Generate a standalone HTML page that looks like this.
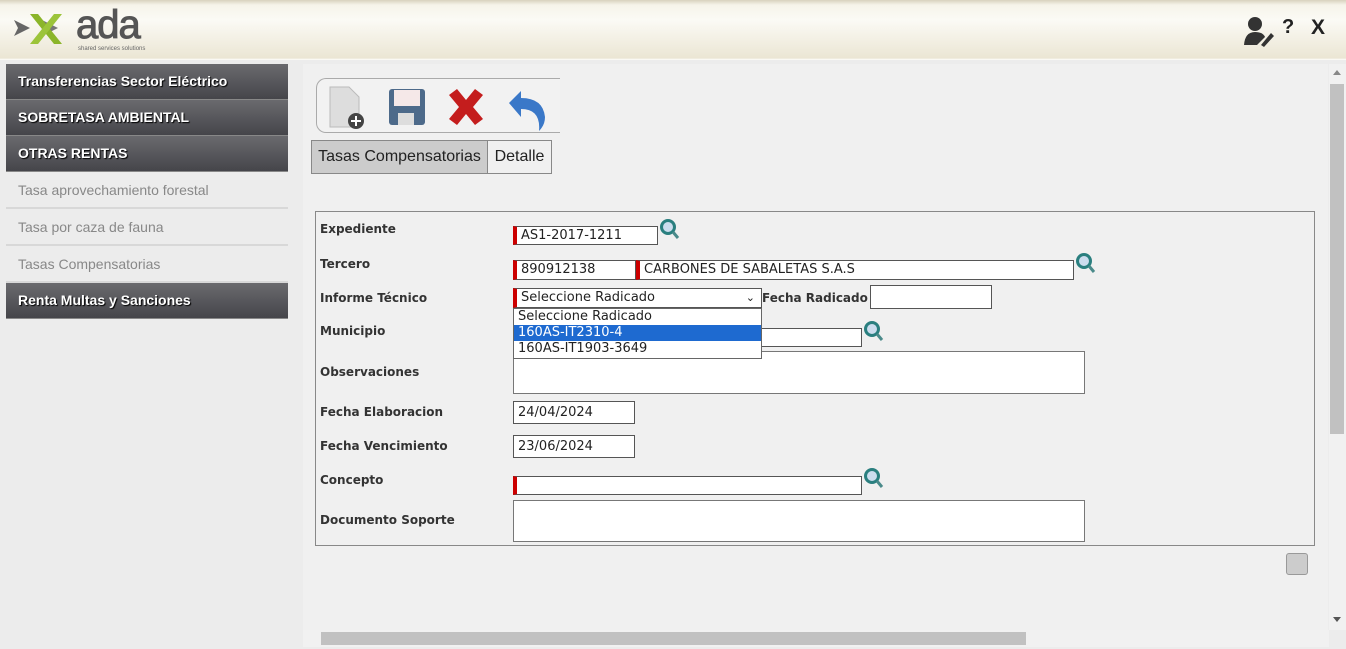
<!DOCTYPE html>
<html><head><meta charset="utf-8"><style>
*{box-sizing:border-box;margin:0;padding:0}
body{width:1346px;height:649px;overflow:hidden;background:#ececec;font-family:"Liberation Sans",sans-serif;position:relative}
.hdr{position:absolute;left:0;top:0;width:1346px;height:60px;background:linear-gradient(#d8d2bd 0,#f6f4ea 5px,#fbfaf5 20px,#ebe6d4 58px,#fff 60px)}
.side{position:absolute;left:6px;top:64px;width:282px}
.mi{height:36px;background:linear-gradient(#6a6a6e,#45454a);color:#fff;font-weight:bold;font-size:14px;line-height:34px;padding-left:12px;border-bottom:1px solid #888;text-shadow:1px 1px 1px #000}
.si{height:37px;background:#ececec;color:#888;font-size:14px;line-height:36px;padding-left:12px;border-bottom:2px solid #d8d8d8}
.main{position:absolute;left:303px;top:64px;width:1025px;height:566px;background:#f0f0f0}
.tb{position:absolute;left:316px;top:78px;width:244px;height:55px;border:1px solid #aaa;border-right:none;border-radius:10px 0 0 10px;background:#f2f2f2}
.tab{position:absolute;top:140px;height:34px;border:1px solid #888;font-size:16px;line-height:32px;text-align:center;color:#222}
.fs{position:absolute;left:315px;top:211px;width:1000px;height:335px;border:1px solid #888}
.lb{position:absolute;left:320px;font-family:"DejaVu Sans",sans-serif;font-weight:bold;font-size:12px;color:#333}
.in{position:absolute;height:20px;border:1px solid #555;background:#fff;font-family:"DejaVu Sans",sans-serif;font-size:13px;line-height:18px;padding-left:4px;color:#222}
.rq{border-left:4px solid #c00}
.ta{position:absolute;border:1px solid #777;background:#fff}
.mag{position:absolute;width:22px;height:22px}
</style></head><body>
<div class="hdr">
<svg style="position:absolute;left:0;top:0" width="160" height="56"><path d="M14 20 L30 28 L14 36 L18 28Z" fill="#666"/><path d="M42 20 L58 28 L42 36 L46 28Z" fill="#777"/><path d="M30 14 L38 14 L62 44 L54 44Z" fill="#8bb52a"/><path d="M54 14 L62 14 L38 44 L30 44Z" fill="#9cc43a"/><text x="76" y="38" font-family="Liberation Sans" font-size="40" fill="#555" stroke="#555" stroke-width="1" letter-spacing="-1">ada</text><text x="78" y="50" font-size="6" fill="#666" font-family="Liberation Sans">shared services solutions</text></svg>
<svg style="position:absolute;left:1243px;top:15px" width="32" height="32"><circle cx="12" cy="9" r="7" fill="#333"/><path d="M1 30 Q2 17 12 17 Q20 17 22 22 L14 30Z" fill="#333"/><path d="M18 30 L28 18 L31 21 L21 32Z" fill="#333"/></svg>
<div style="position:absolute;left:1282px;top:16px;font-weight:bold;font-size:20px;color:#222">?</div>
<div style="position:absolute;left:1311px;top:16px;font-weight:bold;font-size:21px;color:#222">X</div>
</div>
<div class="side">
<div class="mi">Transferencias Sector Eléctrico</div>
<div class="mi">SOBRETASA AMBIENTAL</div>
<div class="mi">OTRAS RENTAS</div>
<div class="si">Tasa aprovechamiento forestal</div>
<div class="si">Tasa por caza de fauna</div>
<div class="si">Tasas Compensatorias</div>
<div class="mi">Renta Multas y Sanciones</div>
</div>
<div class="main"></div>
<div style="position:absolute;left:1329px;top:64px;width:17px;height:566px;background:#f1f1f1"><div style="position:absolute;left:1px;top:20px;width:14px;height:350px;background:#c1c1c1"></div><div style="position:absolute;left:4px;top:6px;border:4px solid transparent;border-bottom:5px solid #888;border-top:0"></div><div style="position:absolute;left:4px;top:553px;border:4px solid transparent;border-top:5px solid #555;border-bottom:0"></div></div>
<div style="position:absolute;left:303px;top:630px;width:1026px;height:17px;background:#f1f1f1"><div style="position:absolute;left:18px;top:2px;width:705px;height:13px;background:#c1c1c1"></div></div>
<div class="tb">
<svg style="position:absolute;left:10px;top:6px" width="40" height="44"><path d="M3 2 H22 L32 12 V42 H3Z" fill="#ddd" stroke="#bbb"/><circle cx="29" cy="36" r="8" fill="#444"/><path d="M29 31V41M24 36H34" stroke="#fff" stroke-width="2"/></svg>
<svg style="position:absolute;left:70px;top:8px" width="40" height="40"><rect x="2" y="2" width="36" height="36" rx="3" fill="#4d6a8a"/><rect x="7" y="3" width="26" height="16" fill="#f5e8e8"/><rect x="11" y="26" width="16" height="12" fill="#ddd"/></svg>
<svg style="position:absolute;left:128px;top:8px" width="42" height="40"><path d="M4 8 L12 2 L21 13 L30 2 L38 8 L28 20 L38 32 L30 38 L21 27 L12 38 L4 32 L14 20Z" fill="#c41d1d"/></svg>
<svg style="position:absolute;left:188px;top:8px" width="44" height="44"><path d="M4 16 L16 4 V11 Q38 11 40 30 Q40 38 34 44 Q36 22 16 22 V30Z" fill="#3a78c8"/></svg>
</div>
<div class="tab" style="left:311px;width:177px;background:#ccc">Tasas Compensatorias</div>
<div class="tab" style="left:487px;width:65px;background:#f0f0f0">Detalle</div>
<div class="fs"></div>
<div class="lb" style="top:222px">Expediente</div>
<div class="lb" style="top:257px">Tercero</div>
<div class="lb" style="top:291px">Informe Técnico</div>
<div class="lb" style="top:324px">Municipio</div>
<div class="lb" style="top:365px">Observaciones</div>
<div class="lb" style="top:405px">Fecha Elaboracion</div>
<div class="lb" style="top:439px">Fecha Vencimiento</div>
<div class="lb" style="top:473px">Concepto</div>
<div class="lb" style="top:513px">Documento Soporte</div>
<div class="lb" style="top:291px;left:762px">Fecha Radicado</div>
<div class="in rq" style="left:513px;top:226px;width:145px;height:19px">AS1-2017-1211</div>
<div class="in rq" style="left:513px;top:260px;width:123px">890912138</div>
<div class="in rq" style="left:636px;top:260px;width:438px">CARBONES DE SABALETAS S.A.S</div>
<div class="in rq" style="left:513px;top:288px;width:249px;padding-left:4px">Seleccione Radicado<span style="position:absolute;right:6px;top:0;font-size:11px">&#8964;</span></div>
<div class="in" style="left:870px;top:285px;width:122px;height:24px"></div>
<div class="in" style="left:760px;top:328px;width:102px;height:19px"></div>
<div class="ta" style="left:513px;top:351px;width:572px;height:43px"></div>
<div class="in" style="left:513px;top:401px;width:122px;height:23px;line-height:21px">24/04/2024</div>
<div class="in" style="left:513px;top:435px;width:122px;height:23px;line-height:21px">23/06/2024</div>
<div class="in rq" style="left:513px;top:476px;width:349px;height:19px"></div>
<div class="ta" style="left:513px;top:500px;width:572px;height:42px"></div>
<div style="position:absolute;left:513px;top:308px;width:249px;height:51px;border:1px solid #666;background:#fff;font-family:'DejaVu Sans',sans-serif;font-size:13px;line-height:16px;color:#222">
<div style="padding-left:4px">Seleccione Radicado</div><div style="padding-left:4px;background:#1e6ad0;color:#fff">160AS-IT2310-4</div><div style="padding-left:4px">160AS-IT1903-3649</div></div>
<svg class="mag" style="left:658px;top:218px"><circle cx="10" cy="9" r="6.5" fill="#cde" stroke="#2a7f7f" stroke-width="3"/><path d="M15 14 L20 20" stroke="#4a8a8a" stroke-width="3"/></svg>
<svg class="mag" style="left:1074px;top:252px"><circle cx="10" cy="9" r="6.5" fill="#cde" stroke="#2a7f7f" stroke-width="3"/><path d="M15 14 L20 20" stroke="#4a8a8a" stroke-width="3"/></svg>
<svg class="mag" style="left:862px;top:320px"><circle cx="10" cy="9" r="6.5" fill="#cde" stroke="#2a7f7f" stroke-width="3"/><path d="M15 14 L20 20" stroke="#4a8a8a" stroke-width="3"/></svg>
<svg class="mag" style="left:862px;top:467px"><circle cx="10" cy="9" r="6.5" fill="#cde" stroke="#2a7f7f" stroke-width="3"/><path d="M15 14 L20 20" stroke="#4a8a8a" stroke-width="3"/></svg>
<div style="position:absolute;left:1286px;top:553px;width:22px;height:22px;border:1px solid #999;border-radius:3px;background:#ccc"></div>
</body></html>
